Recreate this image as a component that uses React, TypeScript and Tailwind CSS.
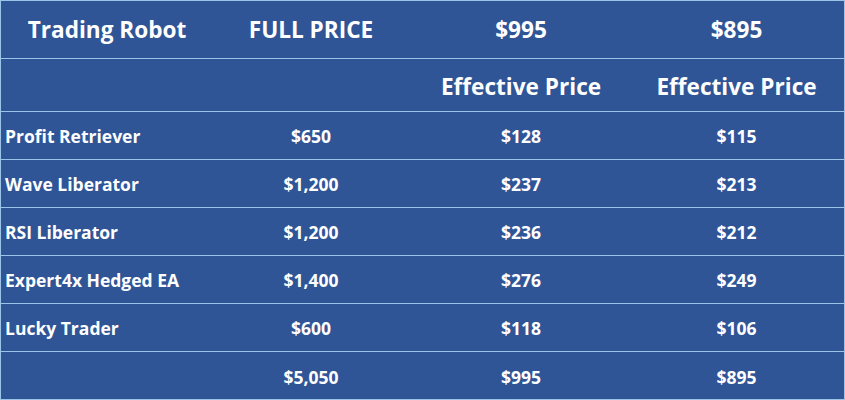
const rows: [string, string, string, string][] = [
  ["Profit Retriever", "$650", "$128", "$115"],
  ["Wave Liberator", "$1,200", "$237", "$213"],
  ["RSI Liberator", "$1,200", "$236", "$212"],
  ["Expert4x Hedged EA", "$1,400", "$276", "$249"],
  ["Lucky Trader", "$600", "$118", "$106"],
  ["", "$5,050", "$995", "$895"],
];

const cols = "grid grid-cols-[208px_204px_216px_215px] items-center border-b border-[#9dc3e6]";

export default function App() {
  return (
    <div className="w-[845px] h-[400px] bg-[#2f5597] border border-[#9dc3e6] text-white font-bold font-['Open_Sans',sans-serif]">
      <div className={`${cols} h-[58px] text-[22.6px]`}>
        <div className="text-center pl-1">Trading Robot</div>
        <div className="text-center">FULL PRICE</div>
        <div className="text-center">$995</div>
        <div className="text-center">$895</div>
      </div>
      <div className={`${cols} h-[53px] text-[22.6px] pt-1`}>
        <div />
        <div />
        <div className="text-center">Effective Price</div>
        <div className="text-center">Effective Price</div>
      </div>
      {rows.map((r, i) => (
        <div key={i} className={`${cols} h-[48px] pt-[2px] text-[17.5px] ${i === rows.length - 1 ? "border-b-0 h-[47px]" : ""}`}>
          <div className="pl-1">{r[0]}</div>
          <div className="text-center">{r[1]}</div>
          <div className="text-center">{r[2]}</div>
          <div className="text-center">{r[3]}</div>
        </div>
      ))}
    </div>
  );
}
